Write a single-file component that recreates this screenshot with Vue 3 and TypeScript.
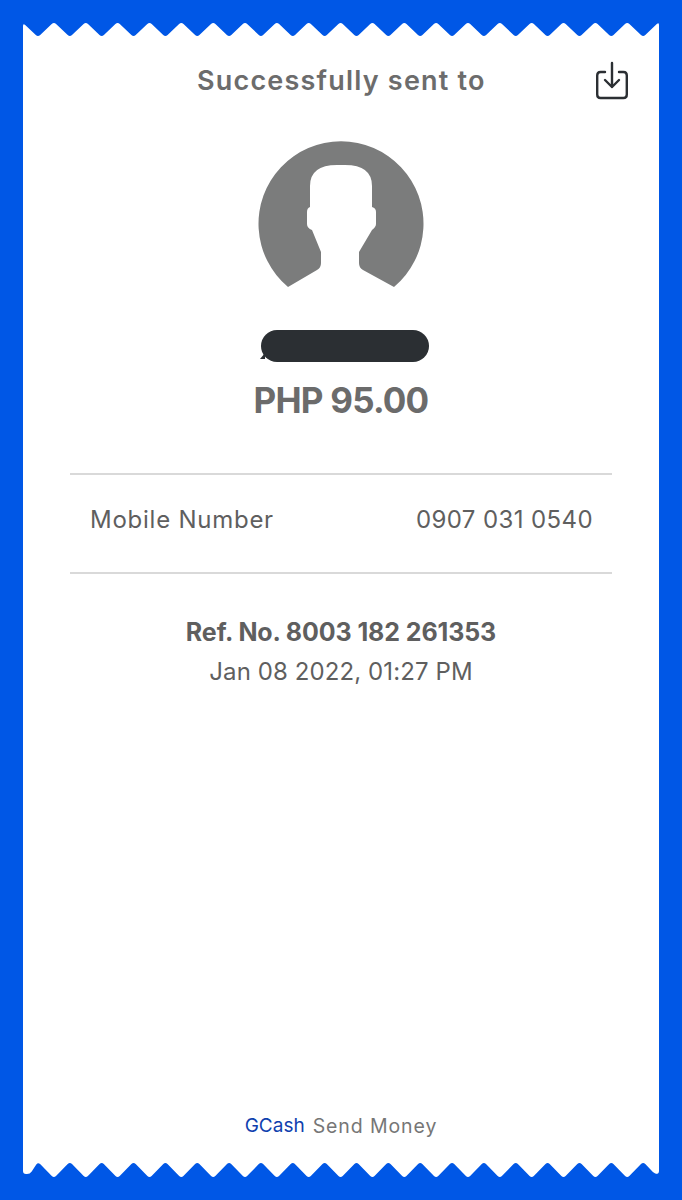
<template>
  <div class="page">
    <svg class="edge" width="636" height="40" viewBox="0 0 636 40">
      <path :d="topEdge" fill="#fff" />
    </svg>
    <main class="sheet">
      <header class="head">
        <span class="head-title">Successfully sent to</span>
        <svg class="save" width="36" height="40" viewBox="0 0 36 40" fill="none" stroke="#2b2f33" stroke-width="2.400" stroke-linecap="round" stroke-linejoin="round">
          <path d="M11 12H6.500Q3.200 12 3.200 15.500V34.500Q3.200 38 6.500 38H29.500Q32.800 38 32.800 34.500V15.500Q32.800 12 29.500 12H25" />
          <path d="M18 3V27M11 20L18 27L25 20" />
        </svg>
      </header>

      <svg class="avatar" width="168" height="152" viewBox="0 -2 168 152">
        <path
          fill="#7b7c7c"
          d="M31 147A82.500 82.500 0 1 1 137 147L106 130Q102 128 102 123V112L115 90Q119 87 119 84V72Q119 68 115 67V46Q115 25 88 25H80Q53 25 53 46V67Q50 68 50 72V84Q50 88 55 90L64 112V123Q64 128 60 130Z"
        />
      </svg>

      <div class="name-mask"></div>
      <div class="amount">PHP 95.00</div>

      <section class="detail">
        <span class="detail-label">Mobile Number</span>
        <span class="detail-value">0907 031 0540</span>
      </section>

      <div class="ref">Ref. No. 8003 182 261353</div>
      <div class="date">Jan 08 2022, 01:27 PM</div>

      <footer class="foot">
        <span class="brand">GCash</span>
        <span class="foot-label">Send Money</span>
      </footer>
    </main>
    <svg class="edge" width="636" height="40" viewBox="0 0 636 40">
      <path :d="bottomEdge" fill="#fff" />
    </svg>
  </div>
</template>

<script setup lang="ts">
type Pt = [number, number];

const PERIOD = 31.85;
const TEETH = 20;
const ROUND = 3;

// corners of the paper edge get a small radius, like the torn receipt in the app
const roundedLine = (pts: Pt[]) => {
  let d = '';
  pts.forEach(([x, y], i) => {
    const prev = pts[i - 1];
    const next = pts[i + 1];
    if (!prev || !next) {
      d += `${i ? 'L' : 'M'}${x} ${y}`;
      return;
    }
    const before = Math.hypot(x - prev[0], y - prev[1]);
    const after = Math.hypot(x - next[0], y - next[1]);
    const ax = x + ((prev[0] - x) / before) * ROUND;
    const ay = y + ((prev[1] - y) / before) * ROUND;
    const bx = x + ((next[0] - x) / after) * ROUND;
    const by = y + ((next[1] - y) / after) * ROUND;
    d += `L${ax.toFixed(1)} ${ay.toFixed(1)}Q${x} ${y} ${bx.toFixed(1)} ${by.toFixed(1)}`;
  });
  return d + 'Z';
};

const teeth = (valley: number, peak: number): Pt[] => {
  const pts: Pt[] = [];
  for (let i = 0; i < TEETH; i++) {
    const x = 15 + i * PERIOD;
    pts.push([+x.toFixed(2), valley]);
    pts.push([+(x + PERIOD / 2).toFixed(2), peak]);
  }
  pts.pop();
  return pts;
};

const topEdge = roundedLine([
  [0, 40],
  [0, 23],
  ...teeth(37, 22),
  [636, 22],
  [636, 40]
]);

const bottomEdge = roundedLine([
  [0, 0],
  [0, 14],
  [7, 14],
  ...teeth(2, 18),
  [632, 14],
  [636, 14],
  [636, 0]
]);
</script>

<style>
body {
  margin: 0;
}
</style>

<style scoped>
.page {
  width: 682px;
  height: 1200px;
  box-sizing: border-box;
  padding: 0 23px;
  display: flex;
  flex-direction: column;
  background: #0057e6;
  font-family: Inter, sans-serif;
  color: #5f5f5f;
  overflow: hidden;
}

.edge {
  display: block;
  flex: none;
}

.sheet {
  flex: 1;
  background: #fff;
  display: flex;
  flex-direction: column;
  align-items: center;
}

.head {
  width: 100%;
  box-sizing: border-box;
  height: 68px;
  padding: 0 29px 0 174px;
  margin-top: 6px;
  display: flex;
  align-items: center;
  justify-content: space-between;
}

.head-title {
  font-size: 27px;
  font-weight: 600;
  letter-spacing: 1.2px;
  color: #6c6c6c;
}

.avatar {
  display: block;
  margin-top: 24px;
}

.name-mask {
  position: relative;
  width: 168px;
  height: 32px;
  margin-top: 40px;
  margin-left: 8px;
  border-radius: 16px;
  background: #2b2f33;
}

.name-mask::before {
  content: "";
  position: absolute;
  left: -1px;
  bottom: 3px;
  border-left: 5px solid transparent;
  border-bottom: 6px solid #2b2f33;
}

.amount {
  margin-top: 14px;
  font-size: 35px;
  font-weight: 700;
  letter-spacing: -0.8px;
  line-height: 48px;
  color: #6b6b6b;
}

.detail {
  width: 542px;
  box-sizing: border-box;
  height: 101px;
  margin-top: 49px;
  padding: 0 19px 9px 20px;
  border-top: 2px solid #d9d9d9;
  border-bottom: 2px solid #d9d9d9;
  display: flex;
  align-items: center;
  justify-content: space-between;
  font-size: 24px;
}

.detail-label {
  letter-spacing: 0.75px;
}

.detail-value {
  letter-spacing: 0.4px;
}

.ref {
  margin-top: 40px;
  font-size: 25px;
  font-weight: 700;
  letter-spacing: -0.1px;
  line-height: 36px;
}

.date {
  margin-top: 5px;
  font-size: 24px;
  letter-spacing: 0.1px;
  line-height: 34px;
}

.foot {
  margin-top: auto;
  margin-bottom: 20px;
  display: flex;
  gap: 8px;
  font-size: 19.500px;
  line-height: 28px;
  color: #767676;
}

.foot-label {
  letter-spacing: 0.9px;
}

.brand {
  font-size: 19px;
  color: #0f3fae;
}
</style>
